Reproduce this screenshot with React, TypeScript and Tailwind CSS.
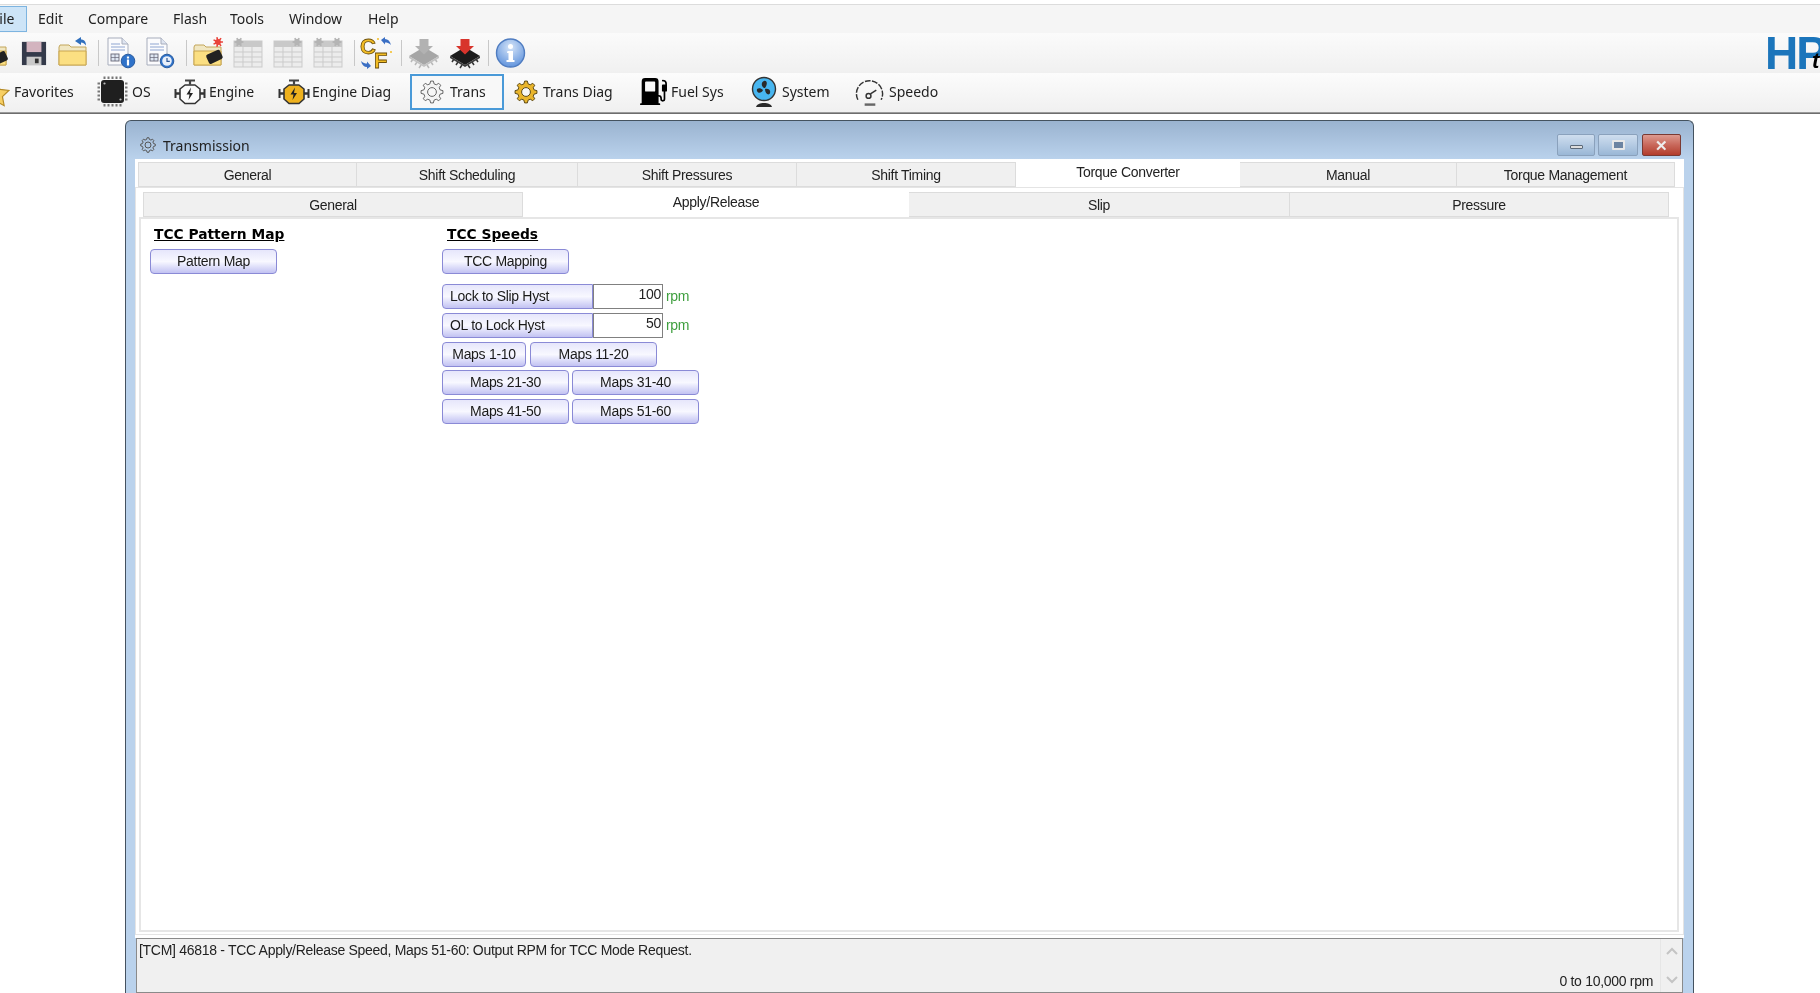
import { BsFuelPumpFill } from "react-icons/bs";

const gearPath = (cx: number, cy: number, outer: number, inner: number, teeth: number) => {
  const pts: string[] = [];
  const step = (Math.PI * 2) / teeth;
  for (let i = 0; i < teeth; i++) {
    const a = i * step;
    const list: [number, number][] = [
      [inner, a - step * 0.32],
      [outer, a - step * 0.16],
      [outer, a + step * 0.16],
      [inner, a + step * 0.32],
    ];
    for (const [r, t] of list) {
      pts.push(`${(cx + r * Math.cos(t)).toFixed(2)} ${(cy + r * Math.sin(t)).toFixed(2)}`);
    }
  }
  return `M${pts.join("L")}Z`;
};

const Gear = ({ fill, stroke, hole = "#f7f7f7" }: { fill: string; stroke: string; hole?: string }) => (
  <svg width="24" height="24" viewBox="0 0 24 24">
    <path d={gearPath(12, 12, 11, 8.4, 8)} fill={fill} stroke={stroke} strokeWidth="1" strokeLinejoin="round" />
    <circle cx="12" cy="12" r="4.4" fill={hole} stroke={stroke} strokeWidth="1" />
  </svg>
);

const Chip = () => (
  <svg width="31" height="31" viewBox="0 0 31 31">
    {[8, 12, 16, 20, 24].map((p) => (
      <g key={p} fill="#777">
        <rect x={p - 1.5} y="0.5" width="2" height="2.5" />
        <rect x={p - 1.5} y="28" width="2" height="2.5" />
        <rect x="0.5" y={p - 1.5} width="2.5" height="2" />
        <rect x="28" y={p - 1.5} width="2.5" height="2" />
      </g>
    ))}
    <rect x="4" y="4" width="23" height="23" rx="3" fill="#1f1f1f" />
    <circle cx="7.5" cy="7.5" r="1.1" fill="#bbb" />
    <circle cx="23.5" cy="23.5" r="1.1" fill="#bbb" />
  </svg>
);

const EngineIcon = ({ fill }: { fill: string }) => (
  <svg width="32" height="26" viewBox="0 0 32 26">
    <path d="M11 1.5h10M16 1.5v4" stroke="#444" strokeWidth="2.2" />
    <path d="M1.5 10v9M30.500 10v9" stroke="#333" strokeWidth="2" />
    <path d="M2 14.500h4M26 14.500h4" stroke="#333" strokeWidth="2.5" />
    <path
      d="M11 6h10l5 4v10l-5 4.500H11L6 20V10z"
      fill={fill}
      stroke="#333"
      strokeWidth="1.6"
      strokeLinejoin="round"
    />
    <path d="M17 8.500l-4.500 7H15.500l-1 5.500 4.500-7h-3z" fill="#222" />
  </svg>
);

const Folder = ({ children }: { children?: React.ReactNode }) => (
  <svg width="32" height="32" viewBox="0 0 32 32">
    <path d="M2 10l1-2h9l2 2h15v18H2z" fill="#f1e7c2" stroke="#c3a65a" />
    <path d="M2 14h27v14H2z" fill="#fbdf82" stroke="#c9a650" />
    {children}
  </svg>
);

const DocIcon = ({ badge }: { badge: "info" | "clock" }) => (
  <svg width="32" height="32" viewBox="0 0 32 32">
    <path d="M4 1h14l6 6v21H4z" fill="#fbfbfd" stroke="#a7adbc" />
    <path d="M18 1v6h6" fill="#dfe5f1" stroke="#a7adbc" />
    <path d="M7 7h9M7 10h14M7 13h14" stroke="#8fa5d2" strokeWidth="1.2" />
    <rect x="7" y="17" width="8" height="7" fill="#dfe7f3" stroke="#667" strokeWidth="0.9" />
    <path d="M7 20.500h8M11 17v7" stroke="#667" strokeWidth="0.7" />
    <circle cx="24" cy="24" r="6.8" fill="#2f72c9" stroke="#2a5c9f" />
    {badge === "info" ? (
      <path d="M24 19.500v2M24 22.500v6" stroke="#fff" strokeWidth="2.2" />
    ) : (
      <>
        <circle cx="24" cy="24" r="4.8" fill="#e8effa" />
        <path d="M24 21v3.400h2.800" stroke="#2c5796" strokeWidth="1.2" fill="none" />
      </>
    )}
  </svg>
);

const TableIcon = ({ left, right }: { left?: boolean; right?: boolean }) => (
  <svg width="32" height="32" viewBox="0 0 32 32">
    <rect x="2" y="4" width="28" height="26" fill="#ececec" stroke="#cbcbcb" />
    <rect x="2" y="4" width="28" height="6" fill="#c9c9c9" />
    <path d="M2 15h28M2 20h28M2 25h28M11 10v20M20 10v20" stroke="#cbcbcb" />
    {left && <path d={gearPath(7, 5, 4.5, 3, 6)} fill="#b4b4b4" />}
    {right && <path d={gearPath(25, 5, 4.5, 3, 6)} fill="#b4b4b4" />}
  </svg>
);

const CfIcon = () => (
  <svg width="32" height="34" viewBox="0 0 32 34">
    <text x="0" y="18" fontFamily="Liberation Sans" fontWeight="700" fontSize="22" fill="#f3bd24" stroke="#6d500c" strokeWidth="0.8">C</text>
    <text x="14" y="32" fontFamily="Liberation Sans" fontWeight="700" fontSize="22" fill="#f3bd24" stroke="#6d500c" strokeWidth="0.8">F</text>
    <path d="M21 4l4-3v2c3 0 5 2 6 6-2-2-4-2.500-6-2.500v2z" fill="#3b6fc4" />
    <path d="M11 30l-4 3v-2c-3 0-5-2-6-6 2 2 4 2.500 6 2.500v-2z" fill="#3b6fc4" />
    <circle cx="18" cy="3" r="1" fill="#f3bd24" />
    <circle cx="31" cy="16" r="1" fill="#f3bd24" />
  </svg>
);

const BurnChip = ({ red }: { red?: boolean }) => (
  <svg width="32" height="32" viewBox="0 0 32 32">
    <path d="M5 22l-2 3M9 25l-2 3M13 28l-2 3M27 22l2 3M23 25l2 3M19 28l2 3" stroke={red ? "#333" : "#b8b8b8"} strokeWidth="1.5" />
    <path d="M16 10L31 19L16 28L1 19Z" fill={red ? "#1b1b1b" : "#a6a6a6"} />
    <path d="M1 19L16 28L31 19V21L16 30L1 21Z" fill={red ? "#3c3c3c" : "#c2c2c2"} />
    <path d="M11.500 2h9v7H25L16 17.500L7 9h4.500z" fill={red ? "#d8342c" : "#b2b2b2"} />
  </svg>
);

const InfoIcon = () => (
  <svg width="31" height="32" viewBox="0 0 31 32">
    <defs>
      <radialGradient id="infoFill" cx="50%" cy="30%" r="75%">
        <stop offset="0%" stopColor="#d5e4f8" />
        <stop offset="100%" stopColor="#5a8fdb" />
      </radialGradient>
    </defs>
    <circle cx="15.5" cy="16" r="14" fill="url(#infoFill)" stroke="#4f7cc0" strokeWidth="1.4" />
    <circle cx="15.5" cy="9.5" r="2.5" fill="#fff" />
    <path d="M12.500 14h5.500v9h1.500v2h-8v-2h2v-7h-1.500z" fill="#fff" />
  </svg>
);

const FanIcon = () => (
  <svg width="26" height="32" viewBox="0 0 26 32">
    <path d="M5 31c1-3 4-4 8-4s7 1 8 4z" fill="#2a2a2a" />
    <circle cx="13" cy="13" r="11.5" fill="#48b6f0" stroke="#333" strokeWidth="1.4" />
    <path d="M13 12c-3-2-3-6 0-7s4 3 1 7zM14 13c3-1 6 1 5 4s-5 1-5-4zM12 14c-1 3-5 4-6 1s3-4 6-1z" fill="#2a2a2a" />
  </svg>
);

const SpeedoIcon = () => (
  <svg width="31" height="30" viewBox="0 0 32 30" fill="none">
    <path d="M4 23a13.500 13.500 0 1 1 24 0" stroke="#333" strokeWidth="1.5" strokeDasharray="6 1.5" />
    <path d="M11 28h11" stroke="#666" strokeWidth="2.5" />
    <circle cx="15" cy="19" r="2.5" stroke="#333" strokeWidth="1.5" />
    <path d="M17 17l6-4" stroke="#333" strokeWidth="1.5" />
  </svg>
);

const Sep = ({ className }: { className: string }) => <div className={`h-[26px] w-px shrink-0 bg-[#c8c8c8] ${className}`} />;

const NavItem = ({ className, icon, label }: { className: string; icon: React.ReactNode; label: string }) => (
  <div className={`flex shrink-0 items-center ${className}`}>
    {icon}
    <span>{label}</span>
  </div>
);

const Btn = ({ className, children }: { className: string; children: React.ReactNode }) => (
  <div
    className={`flex h-[25px] items-center justify-center rounded-[4px] border border-[#8a8ad6] bg-gradient-to-b from-[#e6e6fb] via-[#f8f8ff] to-[#c2c2f2] text-[#1a1a1a] ${className}`}
  >
    {children}
  </div>
);

const ValueRow = ({ label, value }: { label: string; value: string }) => (
  <div className="flex h-[25px] items-center">
    <Btn className="w-[151px] justify-start rounded-r-none pl-[7px]">{label}</Btn>
    <div className="flex h-[25px] w-[70px] items-center justify-end border border-[#808080] bg-white pr-[1px] pb-[4px]">
      {value}
    </div>
    <span className="ml-[3px] text-[#3f9f3f]">rpm</span>
  </div>
);

const topTabs = [
  { label: "General", w: "w-[219px]" },
  { label: "Shift Scheduling", w: "w-[221px]" },
  { label: "Shift Pressures", w: "w-[219px]" },
  { label: "Shift Timing", w: "w-[219px]" },
  { label: "Torque Converter", w: "w-[224px]", active: true },
  { label: "Manual", w: "w-[217px]" },
  { label: "Torque Management", w: "w-[218px]" },
];

const subTabs = [
  { label: "General", w: "w-[380px]" },
  { label: "Apply/Release", w: "w-[386px]", active: true },
  { label: "Slip", w: "w-[381px]" },
  { label: "Pressure", w: "w-[379px]" },
];

const TabRow = ({ tabs, className }: { tabs: { label: string; w: string; active?: boolean }[]; className: string }) => (
  <div className={`flex h-[25px] items-end ${className}`}>
    {tabs.map((t) =>
      t.active ? (
        <div key={t.label} className={`relative z-10 flex h-[28px] items-center justify-center bg-white pb-[1px] ${t.w}`}>
          {t.label}
        </div>
      ) : (
        <div
          key={t.label}
          className={`flex h-[25px] items-center justify-center border border-l-0 border-[#dcdcdc] bg-[#f0f0f0] pt-[2px] first:border-l ${t.w}`}
        >
          {t.label}
        </div>
      ),
    )}
  </div>
);

const App = () => {
  return (
    <div className="h-[993px] w-[1820px] overflow-hidden bg-white font-['Liberation_Sans',sans-serif] text-[14px] tracking-[-0.3px] text-[#222] blur-[0.35px]">
      {/* menu + toolbars */}
      <div className="h-[4px] bg-white" />
      <div className="flex h-[29px] items-center border-t border-[#dcdcdc] bg-[#f5f5f5] pb-[1px] font-['Noto_Sans',sans-serif] tracking-normal">
        <div className="flex h-[26px] w-[27px] shrink-0 items-center overflow-hidden border border-l-0 border-[#7db4e0] bg-[#cde4f7]">
          <span className="-ml-[8px]">File</span>
        </div>
        <span className="ml-[11px] w-[50px]">Edit</span>
        <span className="w-[85px]">Compare</span>
        <span className="w-[57px]">Flash</span>
        <span className="w-[59px]">Tools</span>
        <span className="w-[79px]">Window</span>
        <span>Help</span>
      </div>
      <div className="flex h-[40px] items-center overflow-hidden bg-gradient-to-b from-[#fbfbfb] to-[#f0f0f0]">
        <div className="-ml-[23px] flex shrink-0 items-center">
          <Folder>
            <rect x="16" y="16" width="14" height="10" rx="2" fill="#222" transform="rotate(-25 23 21)" />
          </Folder>
        </div>
        <svg className="ml-[12px] shrink-0" width="26" height="28" viewBox="0 0 28 28">
          <path d="M1 2h26v25H1z" fill="#343a4a" />
          <rect x="6" y="2" width="16" height="11" fill="#d3b4bf" />
          <rect x="6" y="18" width="16" height="9" fill="#c9c9c9" />
          <rect x="15" y="20" width="4" height="5" fill="#333" />
        </svg>
        <div className="ml-[10px] flex shrink-0">
          <Folder>
            <path d="M18 4l6-4v2.500c3 0 5 2 5 6-1.500-2-3-3-5-3V8z" fill="#2f6fbd" />
          </Folder>
        </div>
        <Sep className="ml-[9px]" />
        <div className="ml-[5px] flex shrink-0 gap-[7px]">
          <DocIcon badge="info" />
          <DocIcon badge="clock" />
        </div>
        <Sep className="ml-[11px]" />
        <div className="ml-[5px] shrink-0">
          <Folder>
            <rect x="15" y="15" width="15" height="10" rx="2" fill="#222" transform="rotate(-25 22 20)" />
            <path d={gearPath(26, 5, 5, 3, 7)} fill="#e9433a" />
          </Folder>
        </div>
        <div className="ml-[8px] flex shrink-0 gap-[8px]">
          <TableIcon left />
          <TableIcon right />
          <TableIcon left right />
        </div>
        <Sep className="ml-[10px]" />
        <div className="ml-[5px] shrink-0">
          <CfIcon />
        </div>
        <Sep className="ml-[9px]" />
        <div className="ml-[6px] flex shrink-0 gap-[9px]">
          <BurnChip />
          <BurnChip red />
        </div>
        <Sep className="ml-[7px]" />
        <div className="ml-[6px] shrink-0">
          <InfoIcon />
        </div>
        <div className="relative ml-auto h-[40px] w-[52px] shrink-0 overflow-hidden">
          <span className="absolute -left-[3px] -top-[3px] text-[46px] font-bold leading-none tracking-[-2px] text-[#1b75bb]">
            HP
          </span>
          <span className="absolute left-[44px] top-[17px] text-[22px] font-bold italic leading-none text-black">t</span>
        </div>
      </div>
      <div className="flex h-[39px] items-center overflow-hidden bg-gradient-to-b from-[#fcfcfc] to-[#f0f0f0] pb-[2px] font-['Noto_Sans',sans-serif] tracking-normal">
        <svg className="-ml-[18px] mt-[4px] shrink-0" width="28" height="28" viewBox="0 0 24 24">
          <path d="M12 1l3.400 7 7.600 1-5.500 5.300L19 22l-7-3.700L5 22l1.500-7.700L1 9l7.600-1z" fill="#f7cf63" stroke="#b58a25" />
        </svg>
        <span className="ml-[4px] w-[83px] shrink-0">Favorites</span>
        <NavItem className="w-[77px] gap-[4px]" icon={<Chip />} label="OS" />
        <NavItem className="w-[104px] gap-[3px]" icon={<EngineIcon fill="#fbfbfb" />} label="Engine" />
        <NavItem className="w-[132px] gap-[2px]" icon={<EngineIcon fill="#eeb11e" />} label="Engine Diag" />
        <div className="flex h-[36px] w-[94px] shrink-0 items-center gap-[6px] border-2 border-[#4a9ad8] bg-[#f8f8f8] pl-[8px]">
          <Gear fill="#f4f4f4" stroke="#666" />
          <span>Trans</span>
        </div>
        <NavItem className="ml-[10px] w-[126px] gap-[5px]" icon={<Gear fill="#e9b52c" stroke="#5d4a16" />} label="Trans Diag" />
        <div className="flex w-[111px] shrink-0 items-center gap-[4px]">
          <BsFuelPumpFill className="h-[27px] w-[27px] text-black" />
          <span>Fuel Sys</span>
        </div>
        <NavItem className="w-[103px] gap-[5px]" icon={<FanIcon />} label="System" />
        <NavItem className="gap-[4px]" icon={<SpeedoIcon />} label="Speedo" />
      </div>
      <div className="h-[2px] border-t border-[#9a9a9a] bg-[#6d6d6d]" />

      {/* window */}
      <div className="ml-[125px] mt-[6px] h-[873px] w-[1569px] rounded-t-[6px] border border-b-0 border-[#44525f] bg-gradient-to-b from-[#9ab3d0] to-[#bad2ec] to-[38px]">
        <div className="flex h-[38px] items-center pl-[14px] pr-[12px] pt-[10px] font-['Noto_Sans',sans-serif] tracking-normal">
          <svg width="16" height="16" viewBox="0 0 24 24">
            <path d={gearPath(12, 12, 11, 8.6, 8)} fill="none" stroke="#555" strokeWidth="1.5" />
            <circle cx="12" cy="12" r="4.5" fill="none" stroke="#555" strokeWidth="1.5" />
          </svg>
          <span className="ml-[7px] text-[#222]">Transmission</span>
          <div className="ml-auto flex gap-[3px]">
            <div className="flex h-[22px] w-[38px] items-center justify-center rounded-[2px] border border-[#8aa1bc] bg-gradient-to-b from-[#cfdeef] to-[#9ab7d6]">
              <div className="mt-[4px] h-[4px] w-[13px] rounded-[1px] border border-[#5a6878] bg-[#ddd]" />
            </div>
            <div className="flex h-[22px] w-[40px] items-center justify-center rounded-[2px] border border-[#8aa1bc] bg-gradient-to-b from-[#cfdeef] to-[#9ab7d6]">
              <div className="h-[10px] w-[13px] rounded-[1px] border-2 border-[#e8e8e8] bg-[#6c84a2]" />
            </div>
            <div className="ml-[1px] flex h-[22px] w-[39px] items-center justify-center rounded-[2px] border border-[#7a3a33] bg-gradient-to-b from-[#dd9a90] via-[#c8675a] to-[#b23c2c]">
              <span className="text-[15px] font-bold leading-none text-[#eee]">✕</span>
            </div>
          </div>
        </div>
        <div className="mx-[9px] flex h-[779px] flex-col bg-white pt-[3px]">
          <TabRow tabs={topTabs} className="ml-[3px]" />
          <div className="mb-[3px] flex flex-1 flex-col border border-[#e4e4e4] pt-[4px]">
            <TabRow tabs={subTabs} className="ml-[7px]" />
            <div className="ml-[3px] mr-[4px] mb-[2px] flex flex-1 border-2 border-[#e6e6e6] pl-[9px] pt-[5px]">
              <div className="w-[292px]">
                <div className="ml-[4px] h-[22px] font-['DejaVu_Sans',sans-serif] text-[13.8px] font-bold tracking-normal text-black underline">
                  TCC Pattern Map
                </div>
                <Btn className="mt-[3px] w-[127px]">Pattern Map</Btn>
              </div>
              <div>
                <div className="ml-[5px] h-[22px] font-['DejaVu_Sans',sans-serif] text-[13.8px] font-bold tracking-normal text-black underline">
                  TCC Speeds
                </div>
                <Btn className="mt-[3px] w-[127px]">TCC Mapping</Btn>
                <div className="mt-[10px] flex flex-col gap-[4px]">
                  <ValueRow label="Lock to Slip Hyst" value="100" />
                  <ValueRow label="OL to Lock Hyst" value="50" />
                  <div className="flex gap-[4px]">
                    <Btn className="w-[84px]">Maps 1-10</Btn>
                    <Btn className="w-[127px]">Maps 11-20</Btn>
                  </div>
                  <div className="-mt-[1px] flex gap-[3px]">
                    <Btn className="w-[127px]">Maps 21-30</Btn>
                    <Btn className="w-[127px]">Maps 31-40</Btn>
                  </div>
                  <div className="flex gap-[3px]">
                    <Btn className="w-[127px]">Maps 41-50</Btn>
                    <Btn className="w-[127px]">Maps 51-60</Btn>
                  </div>
                </div>
              </div>
            </div>
          </div>
        </div>
        <div className="mx-[10px] flex h-[55px] border border-[#8a8a8a] bg-[#f0f0f0]">
          <div className="flex flex-1 flex-col justify-between pl-[2px] pr-[3px] pt-[1px]">
            <span>[TCM] 46818 - TCC Apply/Release Speed, Maps 51-60: Output RPM for TCC Mode Request.</span>
            <span className="self-end pr-[4px]">0 to 10,000 rpm</span>
          </div>
          <div className="flex w-[22px] flex-col items-center justify-between border-l border-[#e6e6e6] py-[8px] text-[#bdbdbd]">
            <svg width="12" height="8" viewBox="0 0 12 8" fill="none">
              <path d="M1 7l5-5 5 5" stroke="#c4c4c4" strokeWidth="2" />
            </svg>
            <svg width="12" height="8" viewBox="0 0 12 8" fill="none">
              <path d="M1 1l5 5 5-5" stroke="#c4c4c4" strokeWidth="2" />
            </svg>
          </div>
        </div>
      </div>
    </div>
  );
};

export default App;
